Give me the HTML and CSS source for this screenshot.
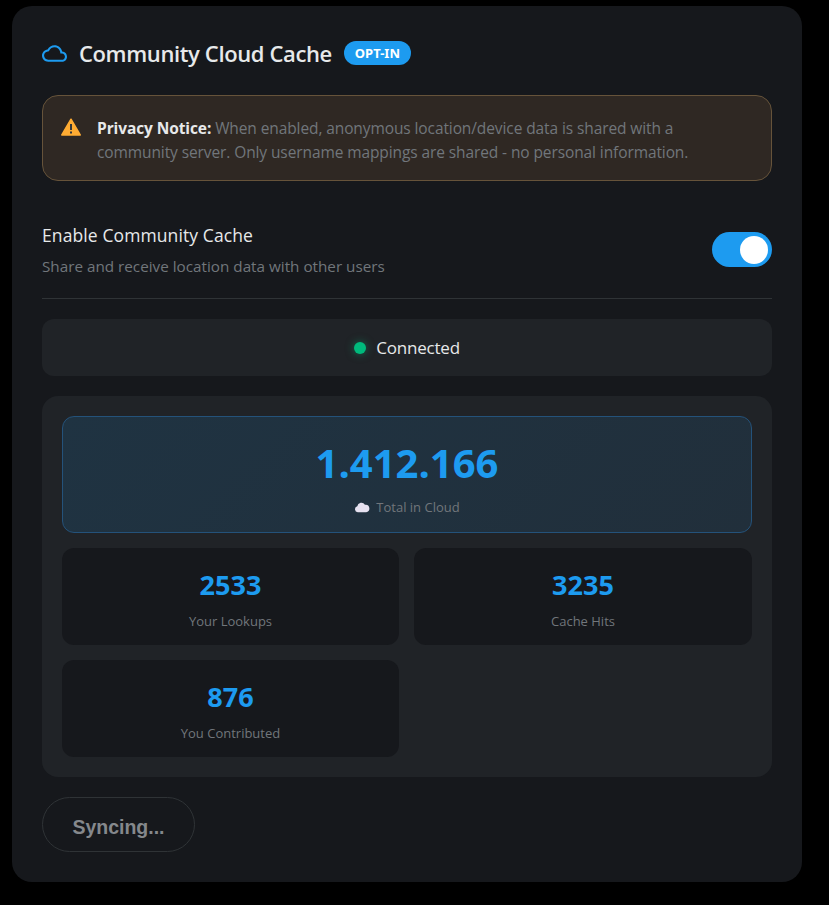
FILE: index.html
```html
<!DOCTYPE html>
<html lang="en">
<head>
  <meta charset="UTF-8">
  <meta name="viewport" content="width=device-width, initial-scale=1.0">
  <title>Community Cloud Cache</title>
  <link rel="stylesheet" href="styles.css">
</head>
<body>
  <section class="card">
    <!-- header -->
    <div class="header">
      <svg class="cloudIcon" width="25" height="25" viewBox="0 0 24 24" fill="#1d9bf0">
        <path d="M19.35 10.04C18.67 6.59 15.64 4 12 4 9.11 4 6.6 5.64 5.35 8.04 2.34 8.36 0 10.91 0 14c0 3.31 2.69 6 6 6h13c2.76 0 5-2.24 5-5 0-2.64-2.05-4.78-4.65-4.96zM19 18H6c-2.21 0-4-1.79-4-4 0-2.05 1.53-3.76 3.56-3.97l1.07-.11.5-.95C8.08 7.14 9.94 6 12 6c2.62 0 4.88 1.86 5.39 4.43l.3 1.5 1.53.11c1.56.1 2.78 1.41 2.78 2.96 0 1.65-1.35 3-3 3z"/>
      </svg>
      <h2 class="title">Community Cloud Cache</h2>
      <span class="badge">OPT-IN</span>
    </div>

    <!-- privacy notice -->
    <div class="notice">
      <svg class="warnIcon" width="20" height="18" viewBox="0 0 20 18">
        <path d="M10 1.200 19.200 17H.800Z" fill="#ffac33" stroke="#ffac33" stroke-width="1.500" stroke-linejoin="round"/>
        <rect x="9" y="6" width="2" height="6" fill="#31373d"/>
        <rect x="9" y="13.500" width="2" height="2" fill="#31373d"/>
      </svg>
      <p class="noticeText"><strong>Privacy Notice:</strong> When enabled, anonymous location/device data is shared with a community server. Only username mappings are shared - no personal information.</p>
    </div>

    <!-- enable toggle -->
    <div class="settingRow">
      <div>
        <div class="settingLabel">Enable Community Cache</div>
        <div class="settingHint">Share and receive location data with other users</div>
      </div>
      <div class="toggle"><span class="knob"></span></div>
    </div>

    <!-- connection -->
    <div class="status">
      <span class="dot"></span>
      <span>Connected</span>
    </div>

    <!-- stats -->
    <div class="stats">
      <div class="hero">
        <div class="heroValue">1.412.166</div>
        <div class="statLabel heroLabel">
          <svg width="16" height="12" viewBox="0 0 17 12">
            <path d="M4 11.500a3.200 3.200 0 0 1-.5-6.300A4.400 4.400 0 0 1 11.600 3.600 3.900 3.900 0 1 1 13 11.500Z" fill="#e6e1f0"/>
          </svg>
          <span>Total in Cloud</span>
        </div>
      </div>
      <div class="statGrid">
        <div class="stat">
          <div class="statValue">2533</div>
          <div class="statLabel">Your Lookups</div>
        </div>
        <div class="stat">
          <div class="statValue">3235</div>
          <div class="statLabel">Cache Hits</div>
        </div>
        <div class="stat">
          <div class="statValue">876</div>
          <div class="statLabel">You Contributed</div>
        </div>
      </div>
    </div>

    <button class="syncBtn" disabled>Syncing...</button>
  </section>
</body>
</html>
```

FILE: styles.css
```css
/* page */
body {
  margin: 0;
  padding: 6px 27px 23px 12px;
  background-color: #000;
  color: #e7e9ea;
  font-family: "Open Sans", "Noto Sans", sans-serif;
}

/* main card */
.card {
  background-color: #16181c;
  border-radius: 20px;
  padding: 29px 30px 30px;
  display: flex;
  flex-direction: column;
  align-items: stretch;
}

/* header */
.header {
  display: flex;
  align-items: center;
  height: 36px;
}
.cloudIcon {
  margin-right: 12px;
}
.title {
  margin: 0 12px 0 0;
  font-size: 22px;
  font-weight: 600;
  letter-spacing: -0.38px;
}
.badge {
  background-color: #1d9bf0;
  color: #fff;
  font-family: "Noto Sans", sans-serif;
  font-size: 13px;
  font-weight: 700;
  line-height: 24px;
  padding: 0 11px;
  border-radius: 12px;
}

/* notice */
.notice {
  display: flex;
  align-items: flex-start;
  margin-top: 24px;
  height: 86px;
  box-sizing: border-box;
  padding: 20px 20px 21px 18px;
  background-color: #2f2823;
  border: 1px solid #66533a;
  border-radius: 16px;
}
.warnIcon {
  margin: 2px 16px 0 0;
  flex-shrink: 0;
}
.noticeText {
  margin: 0;
  color: #71767b;
  font-size: 15.5px;
  line-height: 24px;
  letter-spacing: -0.1px;
}
.noticeText strong {
  color: #e7e9ea;
}

/* toggle row */
.settingRow {
  display: flex;
  justify-content: space-between;
  align-items: center;
  height: 118px;
  box-sizing: border-box;
  padding-top: 20px;
  border-bottom: 1px solid #2f3336;
}
.settingLabel {
  font-size: 17.500px;
  line-height: 24px;
  letter-spacing: 0.1px;
}
.settingHint {
  margin-top: 9px;
  color: #71767b;
  font-size: 15.250px;
  line-height: 20px;
}
.toggle {
  width: 60px;
  height: 35px;
  padding: 4px 4px 3px 0;
  box-sizing: border-box;
  display: flex;
  justify-content: flex-end;
  background-color: #1d9bf0;
  border-radius: 18px;
}
.knob {
  width: 28px;
  height: 28px;
  background-color: #fff;
  border-radius: 50%;
}

/* connection status */
.status {
  margin-top: 20px;
  height: 57px;
  display: flex;
  justify-content: center;
  align-items: center;
  gap: 10px;
  background-color: #202327;
  border-radius: 12px;
  font-size: 17px;
  letter-spacing: -0.2px;
}
.dot {
  width: 12px;
  height: 12px;
  background-color: #00ba7c;
  border-radius: 50%;
  box-shadow: 0 0 8px rgba(0, 186, 124, 0.5);
}

/* stats */
.stats {
  margin-top: 20px;
  padding: 20px;
  background-color: #202327;
  border-radius: 16px;
}
.hero {
  height: 117px;
  box-sizing: border-box;
  padding-top: 20px;
  text-align: center;
  background: linear-gradient(135deg, #1f3342, #212f3b);
  border: 1px solid #24527a;
  border-radius: 12px;
}
.heroValue {
  color: #1d9bf0;
  font-size: 40px;
  font-weight: 700;
  line-height: 52px;
}
.heroLabel {
  display: flex;
  justify-content: center;
  align-items: center;
  gap: 6px;
  margin-top: 10px;
}
.statGrid {
  display: grid;
  grid-template-columns: 337fr 338fr;
  gap: 15px;
  margin-top: 15px;
}
.stat {
  height: 97px;
  box-sizing: border-box;
  padding-top: 19px;
  text-align: center;
  background-color: #16181c;
  border-radius: 12px;
}
.statValue {
  color: #1d9bf0;
  font-size: 27px;
  font-weight: 700;
  line-height: 36px;
}
.statLabel {
  margin-top: 9px;
  color: #71767b;
  font-size: 13px;
  line-height: 18px;
}

/* sync button */
.syncBtn {
  align-self: flex-start;
  margin-top: 20px;
  width: 153px;
  height: 55px;
  padding-top: 6px;
  background: transparent;
  border: 1px solid #2f3336;
  border-radius: 28px;
  color: #85888c;
  font-family: "Liberation Sans", sans-serif;
  font-size: 19.500px;
  font-weight: 700;
}
```
